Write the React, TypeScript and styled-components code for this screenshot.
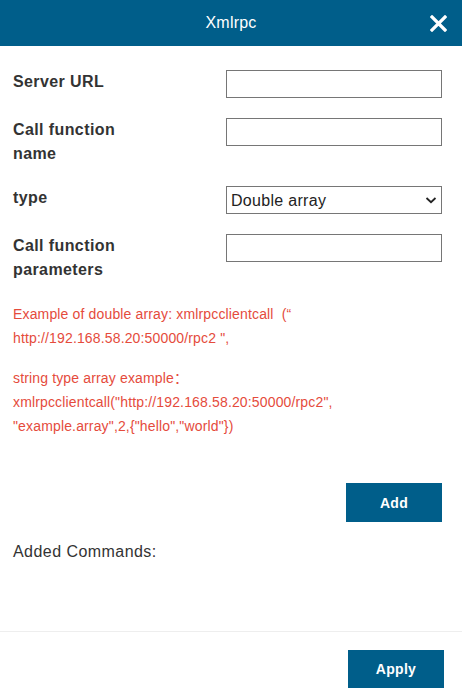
import React from "react";
import styled, { createGlobalStyle } from "styled-components";

const FONT = `"Liberation Sans", Arial, Helvetica, "Noto Sans CJK SC", sans-serif`;

const GlobalStyle = createGlobalStyle`
  html, body {
    margin: 0;
    padding: 0;
    background: #ffffff;
    font-family: ${FONT};
  }
  button, input, select {
    font-family: ${FONT};
  }
`;

const Page = styled.div`
  width: 462px;
  height: 700px;
  display: flex;
  flex-direction: column;
  background: #ffffff;
  color: #333333;
  font-family: ${FONT};
  overflow: hidden;
`;

const Header = styled.div`
  height: 46px;
  flex-shrink: 0;
  background: #005e8a;
  display: flex;
  align-items: center;
  justify-content: center;
  position: relative;
  color: #ffffff;
  font-size: 16px;
  letter-spacing: 0.2px;
`;

const CloseButton = styled.button`
  position: absolute;
  right: 14px;
  top: 13px;
  width: 20px;
  height: 20px;
  padding: 0;
  border: none;
  background: transparent;
  display: flex;
  align-items: center;
  justify-content: center;
  cursor: pointer;
`;

const Body = styled.div`
  flex: 1;
  padding: 24px 20px 0 13px;
  display: flex;
  flex-direction: column;
`;

const Form = styled.div`
  display: flex;
  flex-direction: column;
  gap: 20px;
`;

const Row = styled.div`
  display: grid;
  grid-template-columns: 1fr 216px;
  column-gap: 10px;
  align-items: start;
`;

const Label = styled.div`
  font-size: 16px;
  font-weight: bold;
  line-height: 24px;
  letter-spacing: 0.4px;
  color: #333333;
`;

const TextInput = styled.input`
  box-sizing: border-box;
  width: 216px;
  height: 28px;
  border: 1px solid #767676;
  border-radius: 0;
  padding: 0 6px;
  font-size: 16px;
  outline: none;
`;

const SelectWrap = styled.div`
  position: relative;
  width: 216px;
  height: 28px;
`;

const Select = styled.select`
  box-sizing: border-box;
  width: 216px;
  height: 28px;
  border: 1px solid #767676;
  border-radius: 0;
  padding: 0 4px;
  appearance: none;
  background: #ffffff;
  color: #222222;
  font-size: 16px;
  letter-spacing: 0.3px;
  outline: none;
`;

const Chevron = styled.svg`
  position: absolute;
  right: 5px;
  top: 9px;
  pointer-events: none;
`;

const Hint = styled.div`
  margin-top: 20px;
  color: #e54b3c;
  font-size: 14px;
  line-height: 24px;
  letter-spacing: 0.15px;
  p {
    margin: 0;
  }
  p + p {
    margin-top: 16px;
  }
`;

const ActionRow = styled.div`
  display: flex;
  justify-content: flex-end;
  margin-top: 45px;
`;

const PrimaryButton = styled.button<{ $height: number }>`
  width: 96px;
  height: ${(p) => p.$height}px;
  border: none;
  border-radius: 0;
  background: #005e8a;
  color: #ffffff;
  font-size: 14px;
  font-weight: bold;
  letter-spacing: 0.3px;
  cursor: pointer;
`;

const Added = styled.div`
  margin-top: 21px;
  font-size: 16px;
  line-height: 18px;
  letter-spacing: 0.45px;
  color: #333333;
`;

const Footer = styled.div`
  flex-shrink: 0;
  border-top: 1px solid #eeeeee;
  padding: 18px 18px 12px 0;
  display: flex;
  justify-content: flex-end;
`;

const App = () => {
  return (
    <Page>
      <GlobalStyle />
      <Header>
        Xmlrpc
        <CloseButton aria-label="close">
          <svg width="17" height="17" viewBox="0 0 17 17">
            <path d="M2 2 L15 15 M15 2 L2 15" stroke="#ffffff" strokeWidth="3.2" strokeLinecap="square" />
          </svg>
        </CloseButton>
      </Header>
      <Body>
        <Form>
          <Row>
            <Label>Server URL</Label>
            <TextInput />
          </Row>
          <Row>
            <Label>
              Call function
              <br />
              name
            </Label>
            <TextInput />
          </Row>
          <Row>
            <Label>type</Label>
            <SelectWrap>
              <Select defaultValue="double">
                <option value="double">Double array</option>
                <option value="string">String array</option>
              </Select>
              <Chevron width="12" height="10" viewBox="0 0 12 10">
                <path d="M1.5 3 L6 7.2 L10.5 3" fill="none" stroke="#222222" strokeWidth="1.8" />
              </Chevron>
            </SelectWrap>
          </Row>
          <Row>
            <Label>
              Call function
              <br />
              parameters
            </Label>
            <TextInput />
          </Row>
        </Form>
        <Hint>
          <p>
            Example of double array: xmlrpcclientcall&nbsp; (“
            <br />
            http://192.168.58.20:50000/rpc2 ",
          </p>
          <p>
            string type array example：
            <br />
            xmlrpcclientcall("http://192.168.58.20:50000/rpc2",
            <br />
            "example.array",2,{'{"hello","world"}'})
          </p>
        </Hint>
        <ActionRow>
          <PrimaryButton $height={39}>Add</PrimaryButton>
        </ActionRow>
        <Added>Added Commands:</Added>
      </Body>
      <Footer>
        <PrimaryButton $height={38}>Apply</PrimaryButton>
      </Footer>
    </Page>
  );
};

export default App;
